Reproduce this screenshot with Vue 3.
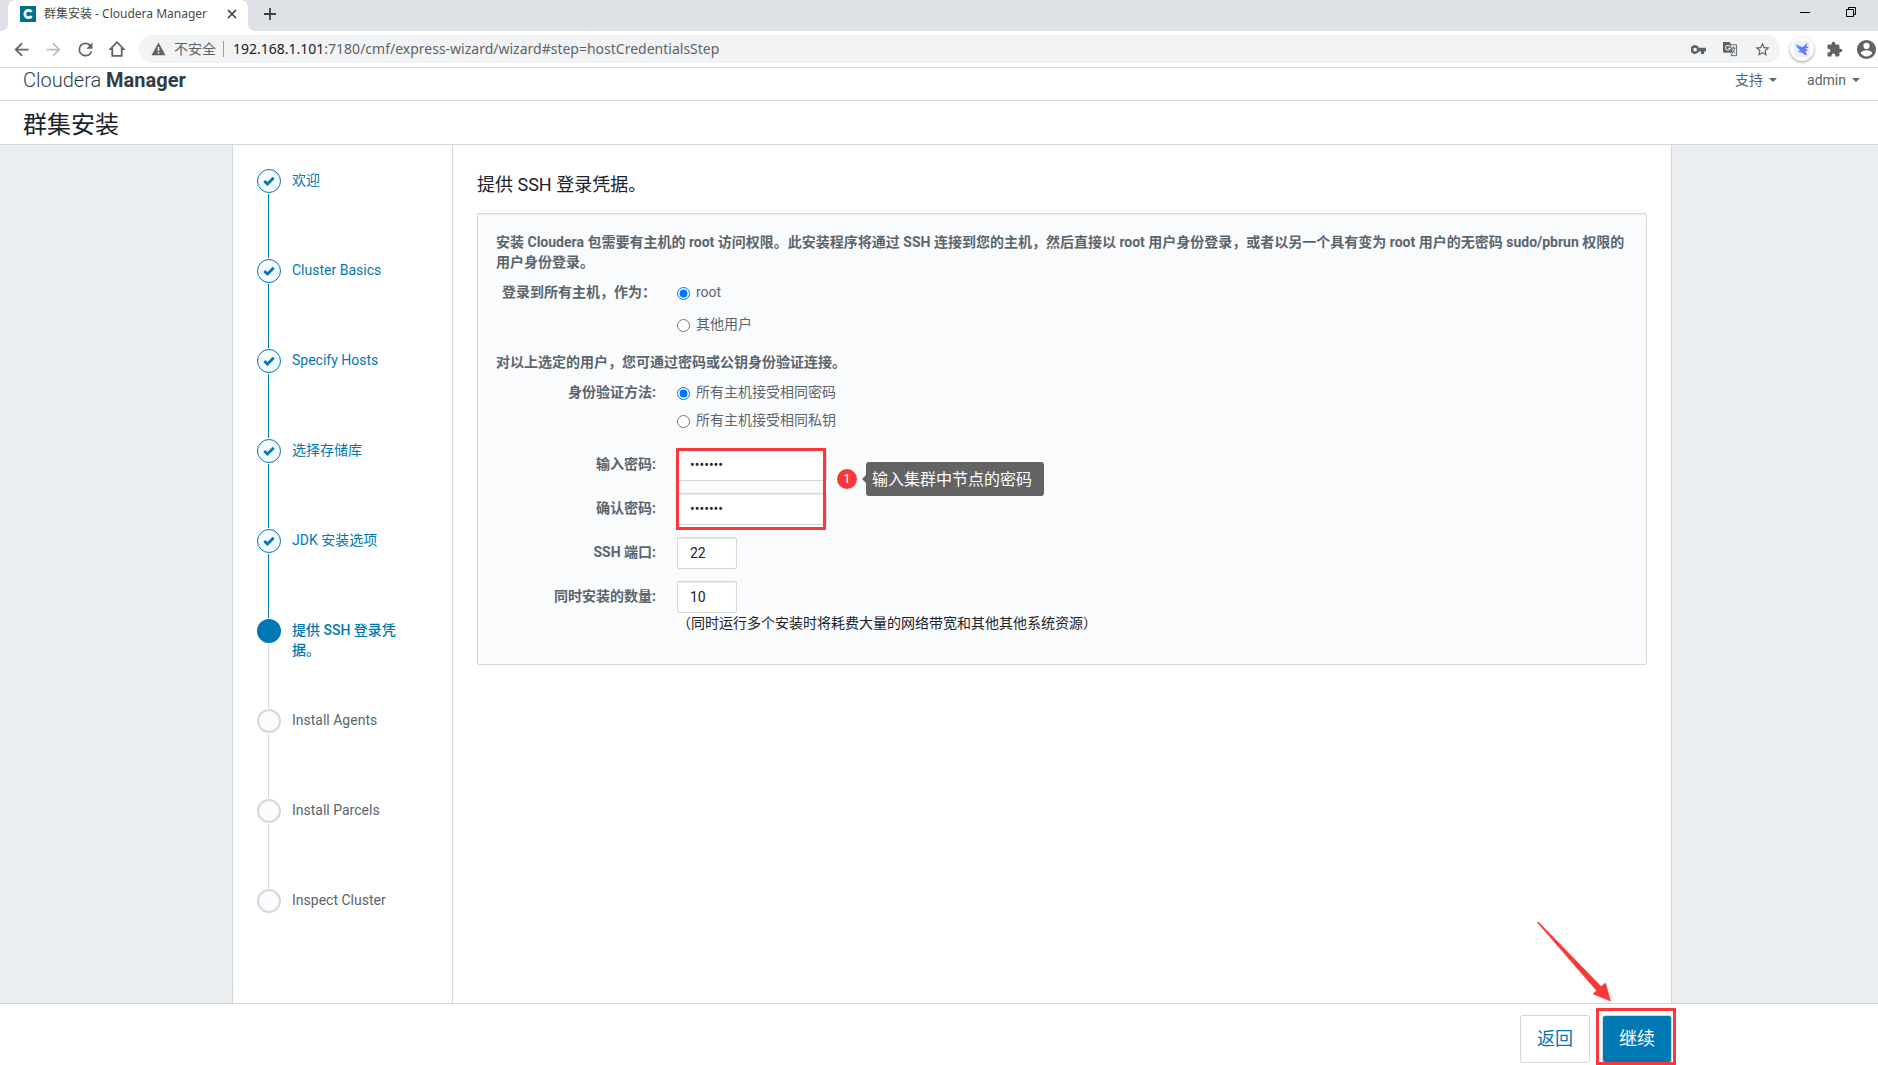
<script setup>
import { ref } from 'vue'

const steps = [
  { label: '欢迎', state: 'done' },
  { label: 'Cluster Basics', state: 'done' },
  { label: 'Specify Hosts', state: 'done' },
  { label: '选择存储库', state: 'done' },
  { label: 'JDK 安装选项', state: 'done' },
  { label: '提供 SSH 登录凭据。', state: 'current' },
  { label: 'Install Agents', state: 'todo' },
  { label: 'Install Parcels', state: 'todo' },
  { label: 'Inspect Cluster', state: 'todo' },
]

const user = ref('root')
const auth = ref('password')
const password = ref('cluster')
const confirmation = ref('cluster')
const port = ref('22')
const parallel = ref('10')
</script>

<template>
  <div class="window">
    <div class="tabstrip">
      <div class="tab">
        <svg class="favicon" viewBox="0 0 16 16" width="16" height="16" aria-hidden="true">
          <rect width="16" height="16" fill="#00708c" />
          <path d="M11.6 5.9A3.7 3.7 0 1 0 11.6 10.1" fill="none" stroke="#fff" stroke-width="2.8" />
        </svg>
        <span class="tab-title">群集安装 - Cloudera Manager</span>
        <button class="icon-btn tab-close" type="button" aria-label="关闭">
          <svg viewBox="0 0 10 10" width="10" height="10"><path d="M1 1l8 8M9 1l-8 8" stroke="#3c4043" stroke-width="1.7" /></svg>
        </button>
      </div>
      <button class="icon-btn new-tab" type="button" aria-label="新标签页">
        <svg viewBox="0 0 12 12" width="12" height="12"><path d="M6 0v12M0 6h12" stroke="#3c4043" stroke-width="1.8" /></svg>
      </button>
      <div class="window-controls">
        <button class="icon-btn" type="button" aria-label="最小化">
          <svg viewBox="0 0 10 10" width="10" height="10"><path d="M0 5.5h10" stroke="#000" /></svg>
        </button>
        <button class="icon-btn" type="button" aria-label="还原">
          <svg viewBox="0 0 10 10" width="10" height="10"><path d="M.5 2.5h7v7h-7zM2.5 2.5V.5h7v7h-2" fill="none" stroke="#000" /></svg>
        </button>
      </div>
    </div>

    <div class="toolbar">
      <button class="icon-btn" type="button" aria-label="后退">
        <svg viewBox="0 0 24 24" width="21" height="21" fill="#5f6368"><path d="M20 11H7.830l5.590-5.590L12 4l-8 8 8 8 1.410-1.410L7.830 13H20z" /></svg>
      </button>
      <button class="icon-btn" type="button" aria-label="前进">
        <svg viewBox="0 0 24 24" width="21" height="21" fill="#babcbe"><path d="M12 4l-1.410 1.410L16.170 11H4v2h12.170l-5.580 5.590L12 20l8-8z" /></svg>
      </button>
      <button class="icon-btn" type="button" aria-label="重新加载">
        <svg viewBox="0 0 24 24" width="21" height="21" fill="#5f6368"><path d="M17.650 6.350A7.950 7.950 0 0 0 12 4a8 8 0 1 0 7.730 10h-2.080A6 6 0 1 1 12 6c1.660 0 3.140.69 4.220 1.780L13 11h7V4z" /></svg>
      </button>
      <button class="icon-btn" type="button" aria-label="主页">
        <svg viewBox="0 0 16 16" width="16" height="16"><path d="M8 1.2L1.5 8H3.3v6.9h9.4V8h1.8z" fill="none" stroke="#5f6368" stroke-width="1.8" /></svg>
      </button>
      <div class="omnibox">
        <svg viewBox="0 0 14 14" width="15" height="14" aria-hidden="true"><path d="M7 .5L14 13.3H0z" fill="#5f6368" /><path d="M7 5v4M7 10v1.6" stroke="#fff" stroke-width="1.5" /></svg>
        <span class="insecure">不安全</span>
        <span class="url"><b>192.168.1.101</b>:7180/cmf/express-wizard/wizard#step=hostCredentialsStep</span>
        <div class="omnibox-actions">
          <button class="icon-btn" type="button" aria-label="密码">
            <svg viewBox="0 0 24 24" width="15" height="15" fill="#5f6368"><path d="M12.5 9A7 7 0 1 0 12.5 15H16v4h5v-4h3V9zM6.500 15a3 3 0 1 1 0-6 3 3 0 0 1 0 6z" /></svg>
          </button>
          <button class="icon-btn" type="button" aria-label="翻译">
            <svg viewBox="0 0 16 16" width="15" height="15"><path d="M1 1h6.5l.7 2H14.5v11.5H8.500" fill="none" stroke="#5f6368" /><path d="M0 0h7l3.5 11.5H1.200Q0 11.500 0 10.300z" fill="#5f6368" /><path d="M7.300 4.700A2.500 2.500 0 1 0 7.700 6.600H5.400" fill="none" stroke="#f1f3f4" stroke-width="1.1" /><path d="M8.500 6.500h5M11 5v1.500M12.500 6.500Q12 9.500 9.800 11M10 8l3 4M8.300 14l2-2.500" fill="none" stroke="#5f6368" /></svg>
          </button>
          <button class="icon-btn" type="button" aria-label="收藏">
            <svg viewBox="0 0 24 24" width="17" height="17" fill="#5f6368"><path d="M22 9.240l-7.190-.62L12 2 9.190 8.630 2 9.240l5.460 4.730L5.820 21 12 17.270 18.180 21l-1.630-7.030zM12 15.400l-3.760 2.270 1-4.280-3.320-2.880 4.380-.38L12 6.100l1.710 4.040 4.380.38-3.320 2.880 1 4.280z" /></svg>
          </button>
        </div>
      </div>
      <button class="icon-btn bird" type="button" aria-label="扩展">
        <svg viewBox="0 0 16 16" width="16" height="16">
          <defs>
            <linearGradient id="wing" x1="0" y1="0" x2="1" y2="1"><stop offset="0" stop-color="#3aa0ff" /><stop offset=".5" stop-color="#5a7dfb" /><stop offset="1" stop-color="#a45cf5" /></linearGradient>
          </defs>
          <rect width="16" height="16" fill="#eef1fd" />
          <path d="M1.500 3.200L8.600 6.200 13.800 1.500 12.300 5 14.800 6.500 11 7.800 14.500 9.200 11.500 10 13.200 14.500Q9 13.500 8.200 11.500 5.500 11.800 3.500 10.200L6.600 9.600Q2.800 7.200 1.500 3.200z" fill="url(#wing)" />
        </svg>
      </button>
      <button class="icon-btn" type="button" aria-label="扩展程序">
        <svg viewBox="0 0 24 24" width="17" height="17" fill="#5f6368"><path d="M20.500 11H19V7a2 2 0 0 0-2-2h-4V3.500a2.500 2.500 0 0 0-5 0V5H4a2 2 0 0 0-2 2v3.800h1.500a2.700 2.700 0 0 1 0 5.400H2V20c0 1.100.9 2 2 2h3.800v-1.500a2.700 2.700 0 0 1 5.400 0V22H17a2 2 0 0 0 2-2v-4h1.500a2.500 2.500 0 0 0 0-5z" /></svg>
      </button>
      <button class="icon-btn" type="button" aria-label="用户">
        <svg viewBox="0 0 24 24" width="23" height="23" fill="#5f6368"><path d="M12 2a10 10 0 1 0 0 20 10 10 0 0 0 0-20zm0 3a3 3 0 1 1 0 6.500A3 3 0 0 1 12 5zm0 14.200a7.200 7.200 0 0 1-6-3.220c.03-1.990 4-3.080 6-3.080s5.970 1.090 6 3.080a7.200 7.200 0 0 1-6 3.220z" /></svg>
      </button>
    </div>

    <header class="app-header">
      <a class="brand" href="#">Cloudera <b>Manager</b></a>
      <nav class="menus">
        <a href="#">支持<i class="caret"></i></a>
        <a href="#">admin<i class="caret"></i></a>
      </nav>
    </header>

    <h1 class="page-title">群集安装</h1>

    <div class="backdrop">
      <div class="wizard">
        <ol class="steps">
          <li v-for="step in steps" :key="step.label" :class="['step', step.state]">
            <span class="marker">
              <svg v-if="step.state === 'done'" viewBox="0 0 12 10" width="12" height="10" aria-hidden="true"><path d="M1.300 4.900L4.500 8 10.700 1.700" fill="none" stroke="#0078b3" stroke-width="2.800" /></svg>
            </span>
            <a class="step-label" href="#">{{ step.label }}</a>
          </li>
        </ol>

        <main class="content">
          <h2>提供 SSH 登录凭据。</h2>
          <form class="panel" @submit.prevent>
            <p>安装 Cloudera 包需要有主机的 root 访问权限。此安装程序将通过 SSH 连接到您的主机，然后直接以 root 用户身份登录，或者以另一个具有变为 root 用户的无密码 sudo/pbrun 权限的用户身份登录。</p>

            <div class="row" role="radiogroup" aria-labelledby="login-as">
              <span id="login-as" class="label">登录到所有主机，作为：</span>
              <div class="options roomy">
                <label class="option"><input v-model="user" type="radio" name="user" value="root">root</label>
                <label class="option"><input v-model="user" type="radio" name="user" value="other">其他用户</label>
              </div>
            </div>

            <p class="second">对以上选定的用户，您可通过密码或公钥身份验证连接。</p>

            <div class="row" role="radiogroup" aria-labelledby="auth-method">
              <span id="auth-method" class="label">身份验证方法:</span>
              <div class="options">
                <label class="option"><input v-model="auth" type="radio" name="auth" value="password">所有主机接受相同密码</label>
                <label class="option"><input v-model="auth" type="radio" name="auth" value="key">所有主机接受相同私钥</label>
              </div>
            </div>

            <div class="fields">
              <div class="field">
                <label class="label" for="password">输入密码:</label>
                <div class="anchor">
                  <input id="password" v-model="password" class="text wide" type="password">
                  <span class="frame"></span>
                  <span class="callout"><span class="badge">1</span><span class="tip">输入集群中节点的密码</span></span>
                </div>
              </div>
              <div class="field">
                <label class="label" for="confirmation">确认密码:</label>
                <input id="confirmation" v-model="confirmation" class="text wide" type="password">
              </div>
              <div class="field">
                <label class="label" for="port">SSH 端口:</label>
                <input id="port" v-model="port" class="text" type="text">
              </div>
              <div class="field">
                <label class="label" for="parallel">同时安装的数量:</label>
                <input id="parallel" v-model="parallel" class="text" type="text" aria-describedby="hint">
              </div>
            </div>
            <div id="hint" class="hint">（同时运行多个安装时将耗费大量的网络带宽和其他其他系统资源）</div>
          </form>
        </main>
      </div>
    </div>

    <footer class="footer">
      <div class="actions">
        <button class="btn" type="button">返回</button>
        <div class="anchor">
          <button class="btn primary" type="button">继续</button>
          <span class="frame"></span>
          <svg class="arrow" viewBox="0 0 75 80" width="75" height="80" aria-hidden="true"><path d="M0 0L1.500 0 64 64.500 68.500 61 73.500 79 56 72 59.500 68.500z" fill="#fb3838" stroke="#fb3838" stroke-width=".6" /></svg>
        </div>
      </div>
    </footer>
  </div>
</template>

<style>
body {
  margin: 0;
}
</style>

<style scoped>
* {
  box-sizing: border-box;
}

.window {
  display: flex;
  flex-direction: column;
  min-height: 100vh;
  overflow: hidden;
  background: #fff;
  color: #5a656d;
  font: 14px/20px Roboto, "Noto Sans CJK SC", sans-serif;
}

a {
  color: inherit;
  text-decoration: none;
}

button,
input {
  font: inherit;
}

.icon-btn {
  display: flex;
  flex: none;
  align-items: center;
  justify-content: center;
  width: 24px;
  height: 24px;
  padding: 0;
  border: 0;
  background: none;
}

/* Browser chrome */
.tabstrip {
  display: flex;
  align-items: center;
  height: 31px;
  padding-left: 8px;
  background: #dee1e6;
}

.tab {
  position: relative;
  display: flex;
  align-items: center;
  width: 240px;
  height: 31px;
  padding: 0 4px 3px 12px;
  border-radius: 8px 8px 0 0;
  background: #fff;
}

.tab::before,
.tab::after {
  content: "";
  position: absolute;
  bottom: 0;
  width: 8px;
  height: 8px;
}

.tab::before {
  right: 100%;
  background: radial-gradient(circle at 0 0, transparent 8px, #fff 8px);
}

.tab::after {
  left: 100%;
  background: radial-gradient(circle at 100% 0, transparent 8px, #fff 8px);
}

.tab-title {
  flex: 1;
  margin-left: 8px;
  color: #45494d;
  font: 12px/20px "Noto Sans", "Noto Sans CJK SC", sans-serif;
  white-space: nowrap;
}

.new-tab {
  margin: 0 0 3px 10px;
}

.window-controls {
  display: flex;
  gap: 22px;
  margin: 0 15px 8px auto;
}

.toolbar {
  display: flex;
  gap: 8px;
  align-items: center;
  height: 37px;
  padding-left: 9px;
  border-bottom: 1px solid #dadce0;
}

.omnibox {
  display: flex;
  flex: 1;
  align-items: center;
  height: 28px;
  margin: 0 2px;
  padding: 0 6px 0 12px;
  border-radius: 14px;
  background: #f1f3f4;
  color: #5f6368;
  font: 14px/20px "Noto Sans", "Noto Sans CJK SC", sans-serif;
}

.insecure {
  margin-left: 8px;
  padding-right: 7px;
  border-right: 1px solid #9aa0a6;
  line-height: 16px;
}

.url {
  margin-left: 9px;
}

.url b {
  color: #202124;
  font-weight: 400;
}

.omnibox-actions {
  display: flex;
  gap: 8px;
  margin-left: auto;
}

.bird {
  border-radius: 50%;
  background: #fff;
  box-shadow: 0 1px 3px rgba(0, 0, 0, 0.4);
}

/* Application header */
.app-header {
  display: flex;
  align-items: center;
  justify-content: space-between;
  height: 33px;
  padding: 0 18px 8px 23px;
  border-bottom: 1px solid #d4d7dc;
}

.brand {
  color: #2f3d46;
  font-size: 20px;
  font-weight: 300;
}

.brand b {
  font-weight: 700;
}

.menus {
  display: flex;
  gap: 30px;
}

.menus a {
  display: flex;
  gap: 6px;
  align-items: center;
}

.caret {
  border: 4px solid transparent;
  border-top-color: #5a656d;
  border-bottom: 0;
}

.page-title {
  height: 44px;
  margin: 0;
  padding: 8px 23px 0;
  border-bottom: 1px solid #d4d7dc;
  color: #1b2329;
  font-size: 24px;
  font-weight: 400;
  line-height: 32px;
}

/* Wizard body */
.backdrop {
  display: flex;
  flex: 1;
  justify-content: center;
  padding-left: 26px;
  background: #eaeef1;
}

.wizard {
  display: flex;
  width: 100%;
  max-width: 1440px;
  border: solid #d4d7dc;
  border-width: 0 1px;
  background: #fff;
}

.steps {
  flex: none;
  width: 220px;
  margin: 0;
  padding: 24px;
  border-right: 1px solid #d4d7dc;
  list-style: none;
}

.step {
  position: relative;
  display: flex;
  gap: 11px;
  height: 90px;
}

.step:last-child {
  height: 24px;
}

.step:not(:last-child)::after {
  content: "";
  position: absolute;
  top: 25px;
  bottom: 1px;
  left: 11px;
  width: 1px;
  background: #d4d7dc;
}

.step.done::after {
  background: #0078b3;
}

.marker {
  display: flex;
  flex: none;
  align-items: center;
  justify-content: center;
  width: 24px;
  height: 24px;
  border: 2px solid #d4d7dc;
  border-radius: 50%;
  background: #fafbfd;
}

.done .marker {
  border: 1px solid #0078b3;
  background: #f4faff;
}

.current .marker {
  border-color: #0078b3;
  background: #0078b3;
}

.step-label {
  width: 110px;
  padding-top: 1px;
}

.done .step-label,
.current .step-label {
  color: #0078b3;
}

.current .step-label {
  font-weight: 500;
}

.content {
  flex: 1;
  min-width: 0;
  padding: 28px 24px;
}

h2 {
  margin: 0 0 16px;
  color: #1b2329;
  font-size: 18px;
  font-weight: 400;
  line-height: 24px;
}

.panel {
  padding: 18px 18px 31px;
  border: 1px solid #d4d7dc;
  border-radius: 2px;
  background: #fafbfd;
  box-shadow: inset 0 1px 1px rgba(0, 0, 0, 0.05);
}

.panel p {
  margin: 0 0 10px;
  font-weight: 700;
}

.panel .second {
  margin-top: 18px;
}

.row,
.field {
  display: flex;
  gap: 21px;
}

.label {
  flex: none;
  width: 160px;
  font-weight: 700;
  text-align: right;
  white-space: nowrap;
}

.options {
  display: grid;
  gap: 8px;
}

.roomy {
  gap: 12px;
}

.option {
  display: flex;
  gap: 6px;
  align-items: center;
}

.option input {
  width: 13px;
  height: 13px;
  margin: 2px 0 0;
}

.fields {
  display: grid;
  gap: 12px;
  margin-top: 19px;
}

.field {
  align-items: center;
}

.field .label {
  padding-bottom: 2px;
}

.anchor {
  position: relative;
  display: flex;
}

.text {
  width: 60px;
  height: 32px;
  padding: 0 12px;
  border: 1px solid #d4d7dc;
  border-radius: 2px;
  background: #fff;
  box-shadow: inset 0 1px 1px rgba(0, 0, 0, 0.08);
  color: #1b2329;
}

.wide {
  width: 150px;
}

.hint {
  padding-left: 181px;
  color: #1b2329;
}

/* Annotations */
.frame {
  position: absolute;
  border: 3px solid #fb3838;
  pointer-events: none;
}

.field .frame {
  top: -1px;
  left: -1px;
  width: 150px;
  height: 82px;
}

.callout {
  position: absolute;
  top: 13px;
  left: 160px;
  display: flex;
  gap: 9px;
  align-items: center;
  height: 34px;
}

.badge {
  width: 20px;
  height: 20px;
  border-radius: 50%;
  background: #fb3838;
  color: #fff;
  font-size: 13px;
  text-align: center;
}

.tip {
  position: relative;
  width: 178px;
  padding: 8px 6px 6px;
  border-radius: 3px;
  background: #636363;
  color: #fff;
  font-size: 16px;
  white-space: nowrap;
}

.tip::before {
  content: "";
  position: absolute;
  top: 13px;
  right: 100%;
  border: 4px solid transparent;
  border-right-color: #636363;
  border-left: 0;
}

/* Footer */
.footer {
  display: flex;
  justify-content: center;
  padding: 11px 0 2px 26px;
  border-top: 1px solid #d4d7dc;
}

.actions {
  display: flex;
  gap: 12px;
  justify-content: flex-end;
  width: 100%;
  max-width: 1440px;
}

.btn {
  width: 70px;
  height: 48px;
  padding: 0;
  border: 1px solid #d4d7dc;
  border-radius: 3px;
  background: #fff;
  color: #0078b3;
  font-size: 18px;
}

.primary {
  background: #0078b3;
  color: #fff;
}

.actions .frame {
  top: -7px;
  left: -6px;
  width: 80px;
  height: 57px;
}

.arrow {
  position: absolute;
  right: 60px;
  bottom: 61px;
}
</style>
